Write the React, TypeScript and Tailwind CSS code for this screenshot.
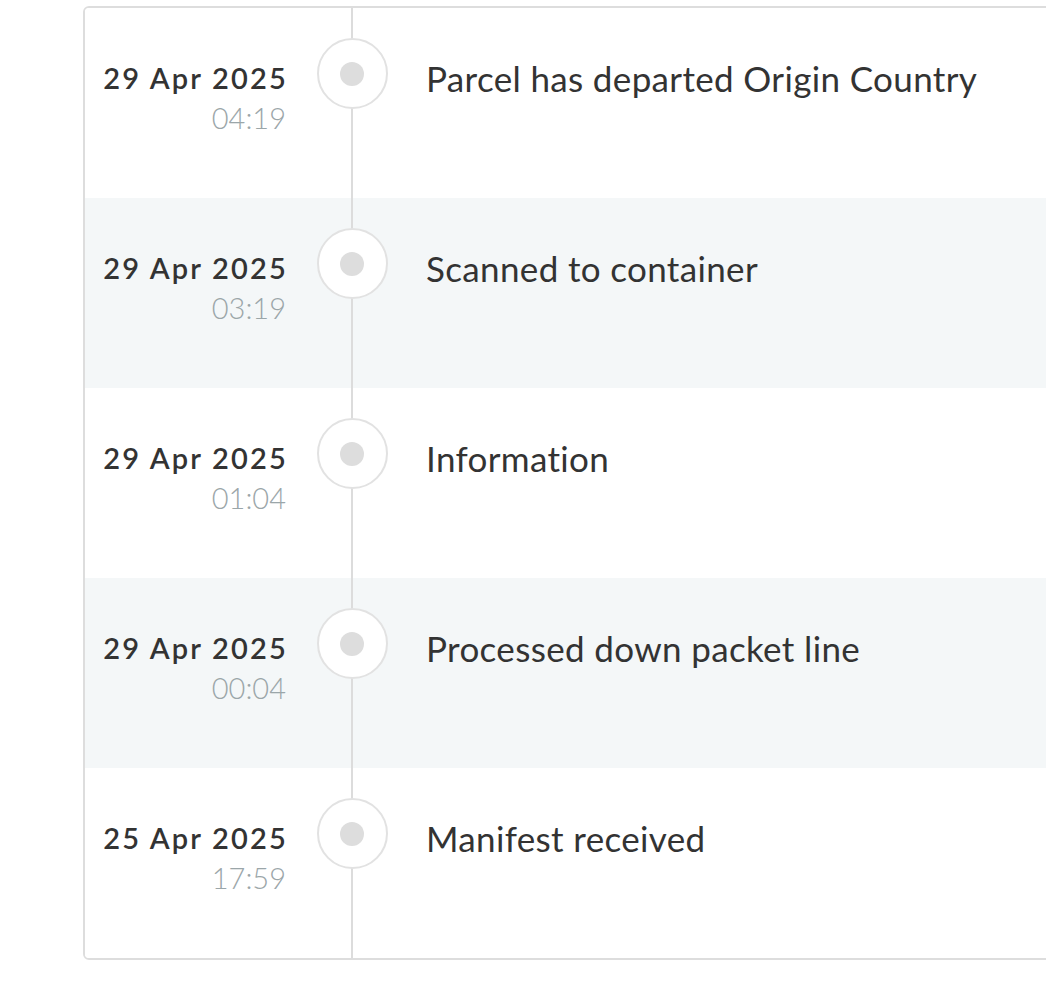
import React from 'react';

interface TrackingEvent {
  date: string;
  time: string;
  description: string;
}

const events: TrackingEvent[] = [
  { date: '29 Apr 2025', time: '04:19', description: 'Parcel has departed Origin Country' },
  { date: '29 Apr 2025', time: '03:19', description: 'Scanned to container' },
  { date: '29 Apr 2025', time: '01:04', description: 'Information' },
  { date: '29 Apr 2025', time: '00:04', description: 'Processed down packet line' },
  { date: '25 Apr 2025', time: '17:59', description: 'Manifest received' },
];

const EventRow: React.FC<{ event: TrackingEvent; shaded: boolean }> = ({ event, shaded }) => {
  return (
    <div className={`flex h-[190px] ${shaded ? 'bg-[#f4f7f8]' : 'bg-white'}`}>
      <div className="w-[201px] shrink-0 pt-[53px] text-right">
        <div className="-mr-[2px] text-[29px] leading-[34px] font-semibold tracking-[0.075em] text-[#333333]">
          {event.date}
        </div>
        <div className="mt-[6px] text-[29px] leading-[34px] font-light text-[#9ba6a9]">
          {event.time}
        </div>
      </div>
      <div className="relative flex w-[132px] shrink-0 justify-center">
        <div className="absolute inset-y-0 left-[65px] w-[2px] bg-[#dcdcdc]" />
        <div className="relative mt-[30px] flex h-[71px] w-[71px] items-center justify-center rounded-full border-2 border-[#e2e2e2] bg-white">
          <div className="h-[24px] w-[24px] rounded-full bg-[#dddddd]" />
        </div>
      </div>
      <div className="pl-[8px] pt-[49px] text-[35px] leading-[42px] tracking-[0.01em] text-[#333333]">
        {event.description}
      </div>
    </div>
  );
};

export default function App() {
  return (
    <div
      className="min-h-[995px] w-[1046px] overflow-hidden bg-white pl-[83px] pt-[6px]"
      style={{ fontFamily: 'Lato, "Noto Sans", sans-serif' }}
    >
      <div className="w-[1100px] overflow-hidden rounded-[6px] border-2 border-[#dddddd]">
        {events.map((event, i) => (
          <EventRow key={i} event={event} shaded={i % 2 === 1} />
        ))}
      </div>
    </div>
  );
}
